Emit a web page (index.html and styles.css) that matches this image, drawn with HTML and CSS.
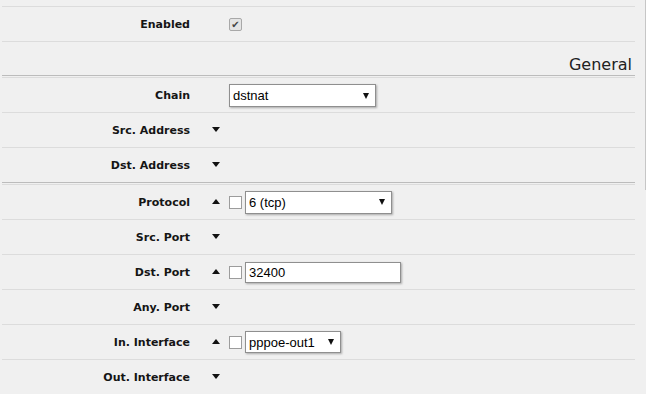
FILE: index.html
```html
<!DOCTYPE html>
<html lang="en">
<head>
  <meta charset="UTF-8">
  <title>NAT Rule</title>
  <link rel="stylesheet" href="styles.css">
</head>
<body>

<div class="form">
  <div class="top-row"></div>

  <div class="row">
    <div class="label">Enabled</div>
    <span class="tog"></span>
    <span class="check checked">&#10004;</span>
  </div>

  <div class="section-title">General</div>
  <div class="sep"></div>

  <div class="row">
    <div class="label">Chain</div>
    <span class="tog"></span>
    <div class="field select chain-select">dstnat<span class="arrow"></span></div>
  </div>

  <div class="row">
    <div class="label">Src. Address</div>
    <span class="tog down"></span>
  </div>

  <div class="row last">
    <div class="label">Dst. Address</div>
    <span class="tog down"></span>
  </div>
  <div class="sep"></div>

  <div class="row">
    <div class="label">Protocol</div>
    <span class="tog up"></span>
    <span class="check"></span>
    <div class="field select proto-select">6 (tcp)<span class="arrow"></span></div>
  </div>

  <div class="row">
    <div class="label">Src. Port</div>
    <span class="tog down"></span>
  </div>

  <div class="row">
    <div class="label">Dst. Port</div>
    <span class="tog up"></span>
    <span class="check"></span>
    <div class="field text port-input">32400</div>
  </div>

  <div class="row">
    <div class="label">Any. Port</div>
    <span class="tog down"></span>
  </div>

  <div class="row">
    <div class="label">In. Interface</div>
    <span class="tog up"></span>
    <span class="check"></span>
    <div class="field select iface-select">pppoe-out1<span class="arrow"></span></div>
  </div>

  <div class="row">
    <div class="label">Out. Interface</div>
    <span class="tog down"></span>
  </div>
</div>

<div class="scroll-edge"></div>

</body>
</html>
```

FILE: styles.css
```css
* {
  margin: 0;
  padding: 0;
  box-sizing: border-box;
}

html, body {
  height: 100%;
  background: #f0f0f0;
  overflow: hidden;
}

body {
  font-family: "DejaVu Sans", Verdana, sans-serif;
  color: #1e1e1e;
  position: relative;
}

.form {
  margin: 0 11px 0 2px;
}

.top-row {
  height: 7px;
  border-bottom: 1px solid #dcdcdc;
}

.row {
  height: 35px;
  display: flex;
  align-items: center;
  border-bottom: 1px solid #dcdcdc;
}

.row.last {
  border-bottom: none;
  height: 34px;
}

.sep {
  height: 3px;
  border-top: 1px solid #bcbcbc;
  border-bottom: 1px solid #dcdcdc;
}

.section-title {
  height: 33px;
  display: flex;
  align-items: flex-end;
  justify-content: flex-end;
  padding-right: 3px;
  font-size: 16px;
  line-height: 19px;
  padding-bottom: 1px;
  color: #222;
}

.label {
  width: 188px;
  text-align: right;
  font-size: 11px;
  font-weight: bold;
  color: #151515;
}

.tog {
  width: 18px;
  margin-left: 21px;
  height: 6px;
  position: relative;
}

.tog.down::before,
.tog.up::before {
  content: "";
  position: absolute;
  left: 1px;
  top: 0;
  border-left: 4.5px solid transparent;
  border-right: 4.5px solid transparent;
}

.tog.down::before {
  border-top: 5px solid #111;
}

.tog.up::before {
  border-bottom: 5px solid #111;
}

.check {
  width: 13px;
  height: 13px;
  border: 1px solid #9c9c9c;
  background: #fff;
  margin-right: 3px;
  display: inline-flex;
  align-items: center;
  justify-content: center;
  font-size: 10px;
  line-height: 1;
  color: #444;
}

.check.checked {
  background: #e4e4e4;
  border-color: #a8a8a8;
  border-radius: 2px;
  margin-top: 1px;
}

.field {
  position: relative;
  background: #fff;
  border: 1px solid #8f8f8f;
  box-shadow: 1px 1px 2px rgba(0, 0, 0, 0.3);
  font-family: "Liberation Sans", Arial, sans-serif;
  font-size: 13px;
  color: #000;
  padding-left: 3px;
  display: flex;
  align-items: center;
}

.select .arrow {
  position: absolute;
  top: 50%;
  right: 6px;
  margin-top: -3px;
  border-left: 3px solid transparent;
  border-right: 3px solid transparent;
  border-top: 6px solid #111;
}

.chain-select {
  width: 147px;
  height: 23px;
  margin-top: 1px;
}

.proto-select {
  width: 147px;
  height: 23px;
}

.port-input {
  width: 156px;
  height: 21px;
}

.iface-select {
  width: 96px;
  height: 22px;
}

.scroll-edge {
  position: absolute;
  top: 0;
  right: 0;
  width: 1px;
  height: 190px;
  background: #c6c6c6;
}
```
